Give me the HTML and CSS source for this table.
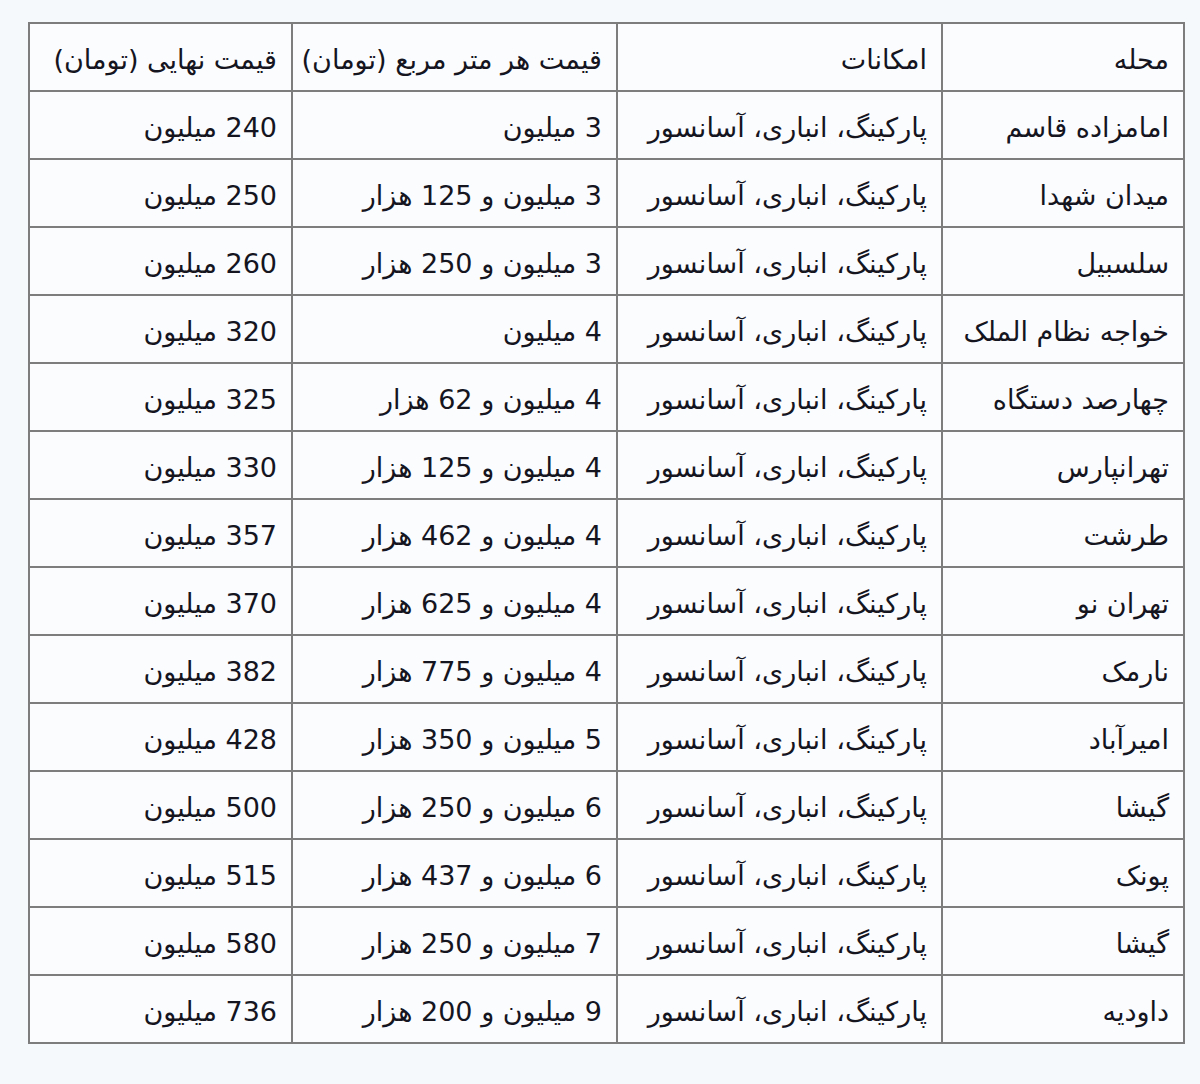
FILE: index.html
```html
<!DOCTYPE html>
<html lang="fa" dir="rtl">
<head>
<meta charset="utf-8">
<link rel="stylesheet" href="styles.css">
</head>
<body>
<table class="prices">
<colgroup><col class="c1"><col class="c2"><col class="c3"><col class="c4"></colgroup>
<tr><td>محله</td><td>امکانات</td><td>قیمت هر متر مربع (تومان)</td><td>قیمت نهایی (تومان)</td></tr>
<tr><td>امامزاده قاسم</td><td>پارکینگ، انباری، آسانسور</td><td>3 میلیون</td><td>240 میلیون</td></tr>
<tr><td>میدان شهدا</td><td>پارکینگ، انباری، آسانسور</td><td>3 میلیون و 125 هزار</td><td>250 میلیون</td></tr>
<tr><td>سلسبیل</td><td>پارکینگ، انباری، آسانسور</td><td>3 میلیون و 250 هزار</td><td>260 میلیون</td></tr>
<tr><td>خواجه نظام الملک</td><td>پارکینگ، انباری، آسانسور</td><td>4 میلیون</td><td>320 میلیون</td></tr>
<tr><td>چهارصد دستگاه</td><td>پارکینگ، انباری، آسانسور</td><td>4 میلیون و 62 هزار</td><td>325 میلیون</td></tr>
<tr><td>تهرانپارس</td><td>پارکینگ، انباری، آسانسور</td><td>4 میلیون و 125 هزار</td><td>330 میلیون</td></tr>
<tr><td>طرشت</td><td>پارکینگ، انباری، آسانسور</td><td>4 میلیون و 462 هزار</td><td>357 میلیون</td></tr>
<tr><td>تهران نو</td><td>پارکینگ، انباری، آسانسور</td><td>4 میلیون و 625 هزار</td><td>370 میلیون</td></tr>
<tr><td>نارمک</td><td>پارکینگ، انباری، آسانسور</td><td>4 میلیون و 775 هزار</td><td>382 میلیون</td></tr>
<tr><td>امیرآباد</td><td>پارکینگ، انباری، آسانسور</td><td>5 میلیون و 350 هزار</td><td>428 میلیون</td></tr>
<tr><td>گیشا</td><td>پارکینگ، انباری، آسانسور</td><td>6 میلیون و 250 هزار</td><td>500 میلیون</td></tr>
<tr><td>پونک</td><td>پارکینگ، انباری، آسانسور</td><td>6 میلیون و 437 هزار</td><td>515 میلیون</td></tr>
<tr><td>گیشا</td><td>پارکینگ، انباری، آسانسور</td><td>7 میلیون و 250 هزار</td><td>580 میلیون</td></tr>
<tr><td>داودیه</td><td>پارکینگ، انباری، آسانسور</td><td>9 میلیون و 200 هزار</td><td>736 میلیون</td></tr>
</table>
</body>
</html>
```

FILE: styles.css
```css
html, body {
  margin: 0;
  padding: 0;
  background: #f6f9fc;
}
body {
  font-family: "DejaVu Sans", sans-serif;
  color: #15151f;
}
.prices {
  direction: rtl;
  border-collapse: collapse;
  table-layout: fixed;
  width: 1155px;
  margin: 22px 15px 0 30px;
  background: #fbfcfe;
}
.c1 { width: 242px; }
.c2 { width: 325px; }
.c3 { width: 325px; }
.c4 { width: 263px; }
.prices td {
  border: 2px solid #7d7d7d;
  height: 68px;
  padding: 6px 14px 0 6px;
  box-sizing: border-box;
  text-align: right;
  font-size: 27px;
  line-height: 1.2;
  white-space: nowrap;
  vertical-align: middle;
}
```
